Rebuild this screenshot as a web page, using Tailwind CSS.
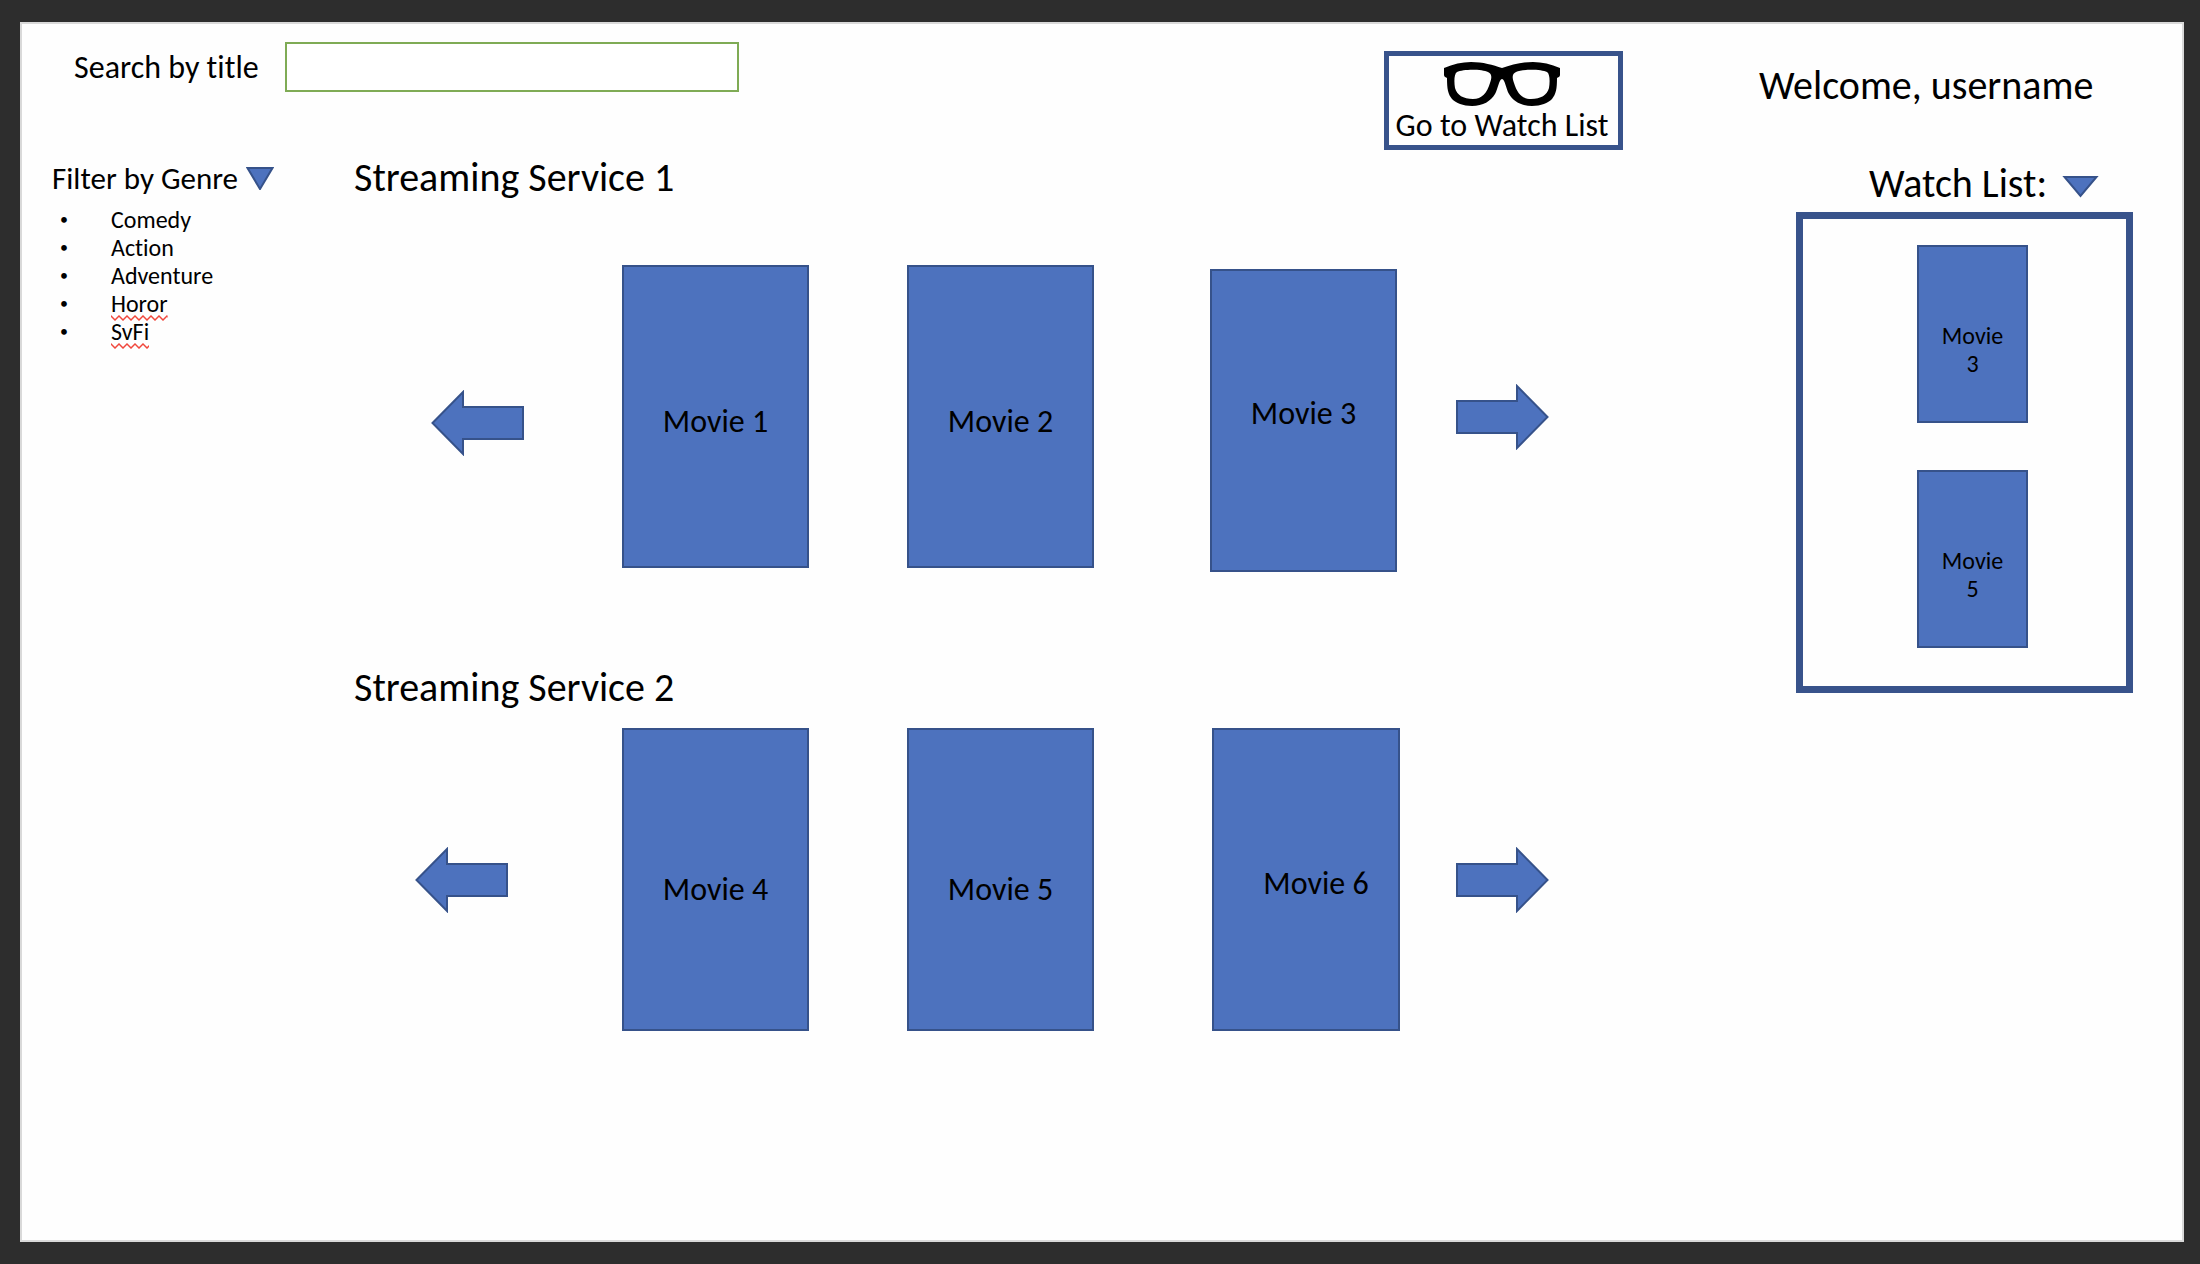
<!DOCTYPE html>
<html lang="en">
<head>
<meta charset="utf-8">
<meta name="viewport" content="width=device-width, initial-scale=1">
<title>Streaming Services</title>
<script src="https://cdn.jsdelivr.net/npm/@tailwindcss/browser@4"></script>
</head>
<body class="flex min-h-screen bg-[#2d2d2d] pt-[22px] pr-4 pb-[22px] pl-5 font-[Carlito,Lato,sans-serif] text-black [font-variant-ligatures:none]">
<svg class="absolute size-0" aria-hidden="true">
  <defs>
    <pattern id="squiggle" width="8" height="6" patternUnits="userSpaceOnUse">
      <path d="M-1 0 L0 1 L4 5 L8 1 L9 0" fill="none" stroke="#f0473c" stroke-width="1.5"/>
    </pattern>
    <symbol id="arrow-left" viewBox="0 0 93 66">
      <path d="M1.500 33 L32 2 V17 H92 V49 H32 V64 Z" fill="#4d72be" stroke="#36528a" stroke-width="2"/>
    </symbol>
    <symbol id="arrow-right" viewBox="0 0 93 66">
      <path d="M91.500 33 L61 2 V17 H1 V49 H61 V64 Z" fill="#4d72be" stroke="#36528a" stroke-width="2"/>
    </symbol>
  </defs>
</svg>
<div class="flex grow flex-col border-2 border-[#d9d9d9] bg-[#fefefe]">
  <header class="flex h-[132px] items-start">
    <form class="flex pt-[18px] pl-[52px]">
      <label for="title" class="w-[211px] pt-[2px] text-[32px] leading-[48px]">Search by title</label>
      <input id="title" type="text" class="h-[50px] w-[454px] border-2 border-[#7fab55] bg-white px-3 text-[32px] outline-none">
    </form>
    <button type="button" class="mt-[27px] ml-auto flex h-[99px] w-[239px] flex-col items-center border-5 border-[#38538b] pt-[6px] pr-[3px] whitespace-nowrap">
      <svg class="h-11 w-[116px] shrink-0" viewBox="0 0 116 44" aria-hidden="true">
        <path fill-rule="evenodd" d="M0 6 C9 2 18 0 27 0 C39 0 49 3 58 6 C67 3 77 0 89 0 C98 0 107 2 116 6 V13 C116 15 114 15 113 16 C113 27 112 32 108 37 C104 41 97 44 88 44 C77 44 69 39 65 32 C62 27 61 17 58 17 C55 17 54 27 51 32 C47 39 39 44 28 44 C19 44 12 41 8 37 C4 32 3 27 3 16 C2 15 0 15 0 13 Z M13 10 C19 7 38 7 44 10 C48 12 48 15 46 21 C43 31 38 37 29 37 C19 37 13 33 11 26 C10 20 10 12 13 10 Z M103 10 C97 7 78 7 72 10 C68 12 68 15 70 21 C73 31 78 37 87 37 C97 37 103 33 105 26 C106 20 106 12 103 10 Z"/>
      </svg>
      <span class="text-[32px] leading-10">Go to Watch List</span>
    </button>
    <p class="mt-10 mr-[86px] ml-[136px] w-[337px] text-[40px] leading-[44px] whitespace-nowrap">Welcome, username</p>
  </header>

  <div class="flex grow items-start">
    <nav class="w-[332px] shrink-0 pt-1 pl-[30px]" aria-label="Genres">
      <div class="flex items-center">
        <h2 class="w-[194px] text-[31px] leading-9 whitespace-nowrap">Filter by Genre</h2>
        <button type="button" aria-label="Toggle genres">
          <svg class="h-6 w-7" viewBox="0 0 28 24"><path d="M1.500 2 H26.500 L14 23 Z" fill="#4d72be" stroke="#36528a" stroke-width="2"/></svg>
        </button>
      </div>
      <ul class="mt-[10px] text-[24px] leading-7">
        <li class="flex"><span class="w-[59px] pl-2 text-base leading-7">•</span>Comedy</li>
        <li class="flex"><span class="w-[59px] pl-2 text-base leading-7">•</span>Action</li>
        <li class="flex"><span class="w-[59px] pl-2 text-base leading-7">•</span>Adventure</li>
        <li class="flex"><span class="w-[59px] pl-2 text-base leading-7">•</span><span class="relative">Horor<svg class="absolute bottom-[-3px] left-0 h-[6px] w-full" aria-hidden="true"><rect width="100%" height="6" fill="url(#squiggle)"/></svg></span></li>
        <li class="flex"><span class="w-[59px] pl-2 text-base leading-7">•</span><span class="relative">SvFi<svg class="absolute bottom-[-3px] left-0 h-[6px] w-full" aria-hidden="true"><rect width="100%" height="6" fill="url(#squiggle)"/></svg></span></li>
      </ul>
    </nav>

    <main class="grow">
      <section>
        <h2 class="text-[40px] leading-[44px]">Streaming Service 1</h2>
        <div class="mt-[65px] flex items-start pl-[77px] text-[32px] leading-9">
          <button type="button" class="mt-[125px]" aria-label="Previous"><svg class="h-[66px] w-[93px]"><use href="#arrow-left"/></svg></button>
          <a href="#" class="ml-[98px] flex h-[303px] w-[187px] items-center justify-center border-2 border-[#36528a] bg-[#4d72be] pt-[10px]">Movie 1</a>
          <a href="#" class="ml-[98px] flex h-[303px] w-[187px] items-center justify-center border-2 border-[#36528a] bg-[#4d72be] pt-[10px]">Movie 2</a>
          <a href="#" class="mt-1 ml-[116px] flex h-[303px] w-[187px] items-center justify-center border-2 border-[#36528a] bg-[#4d72be] pb-[14px]">Movie 3</a>
          <button type="button" class="mt-[119px] ml-[59px]" aria-label="Next"><svg class="h-[66px] w-[93px]"><use href="#arrow-right"/></svg></button>
        </div>
      </section>
      <section class="mt-[94px]">
        <h2 class="text-[40px] leading-[44px]">Streaming Service 2</h2>
        <div class="mt-[18px] flex items-start pl-[61px] text-[32px] leading-9">
          <button type="button" class="mt-[119px]" aria-label="Previous"><svg class="h-[66px] w-[93px]"><use href="#arrow-left"/></svg></button>
          <a href="#" class="ml-[114px] flex h-[303px] w-[187px] items-center justify-center border-2 border-[#36528a] bg-[#4d72be] pt-5">Movie 4</a>
          <a href="#" class="ml-[98px] flex h-[303px] w-[187px] items-center justify-center border-2 border-[#36528a] bg-[#4d72be] pt-5">Movie 5</a>
          <a href="#" class="ml-[118px] flex h-[303px] w-[188px] items-center justify-center border-2 border-[#36528a] bg-[#4d72be] pt-2 pl-5">Movie 6</a>
          <button type="button" class="mt-[119px] ml-14" aria-label="Next"><svg class="h-[66px] w-[93px]"><use href="#arrow-right"/></svg></button>
        </div>
      </section>
    </main>

    <aside class="mr-[49px] w-[337px] shrink-0 pt-[6px]">
      <div class="flex items-center pl-[73px]">
        <h2 class="w-[193px] text-[40px] leading-[44px] whitespace-nowrap">Watch List:</h2>
        <button type="button" class="pt-[6px]" aria-label="Toggle watch list">
          <svg class="h-6 w-[37px]" viewBox="0 0 37 24"><path d="M2.500 2 H34.500 L18.500 21 Z" fill="#4d72be" stroke="#36528a" stroke-width="2"/></svg>
        </button>
      </div>
      <div class="mt-[6px] flex h-[481px] flex-col items-center gap-[47px] border-7 border-[#38538b] pt-[26px] pl-4 text-center text-[24px] leading-7">
        <a href="#" class="flex h-[178px] w-[111px] items-center border-2 border-[#36528a] bg-[#4d72be] px-5 pt-8">Movie 3</a>
        <a href="#" class="flex h-[178px] w-[111px] items-center border-2 border-[#36528a] bg-[#4d72be] px-5 pt-8">Movie 5</a>
      </div>
    </aside>
  </div>
</div>
</body>
</html>
